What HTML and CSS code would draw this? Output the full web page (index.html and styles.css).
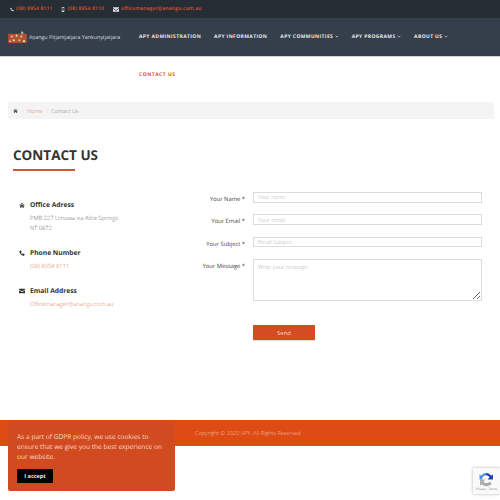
FILE: index.html
```html
<!DOCTYPE html>
<html lang="en">

<head>
    <meta charset="UTF-8">
    <meta name="viewport" content="width=device-width, initial-scale=1.0">
    <title>Contact Us</title>
    <link rel="stylesheet" href="styles.css">
</head>

<body>
    <div class="topbar">
        <span class="top-item">
            <svg class="top-icon" viewBox="0 0 16 16"><path d="M3 1l3 1 1 4-2 1c1 2 2 3 4 4l1-2 4 1 1 3-2 2C7 15 1 9 1 3z" /></svg>
            <a href="#">(08) 8954 8111</a>
        </span>
        <span class="top-item">
            <svg class="top-icon" viewBox="0 0 10 16"><path fill-rule="evenodd" d="M1 0h8v16H1zM2.5 2v10h5V2z" /></svg>
            <a href="#">(08) 8954 8110</a>
        </span>
        <span class="top-item">
            <svg class="top-icon mail" viewBox="0 0 16 12"><path d="M0 0h16v2L8 7 0 2zM0 4l8 5 8-5v8H0z" /></svg>
            <a href="#">officemanager@anangu.com.au</a>
        </span>
    </div>

    <header class="navbar">
        <a class="brand" href="#">
            <svg class="logo" viewBox="0 0 20 14">
                <rect y="3" width="20" height="10" fill="#b5512c" />
                <circle cx="4" cy="6" r="1.2" fill="#d9c2a6" />
                <circle cx="9" cy="5" r="1.1" fill="#e8d9c4" />
                <circle cx="14" cy="6" r="1.2" fill="#d9c2a6" />
                <circle cx="15" cy="2" r="1.4" fill="#aab0b5" />
                <circle cx="6" cy="10" r="1.2" fill="#e8d9c4" />
                <circle cx="12" cy="10" r="1.1" fill="#d9c2a6" />
                <circle cx="17" cy="11" r="1.2" fill="#e8d9c4" />
                <circle cx="2" cy="11" r="1" fill="#d9c2a6" />
            </svg>
            <span>Aṉangu Pitjantjatjara Yankunytjatjara</span>
        </a>
        <nav class="menu">
            <a href="#">APY ADMINISTRATION</a>
            <a href="#">APY INFORMATION</a>
            <a href="#">APY COMMUNITIES<svg class="caret" viewBox="0 0 6 4"><path d="M1 1l2 2 2-2" /></svg></a>
            <a href="#">APY PROGRAMS<svg class="caret" viewBox="0 0 6 4"><path d="M1 1l2 2 2-2" /></svg></a>
            <a href="#">ABOUT US<svg class="caret" viewBox="0 0 6 4"><path d="M1 1l2 2 2-2" /></svg></a>
        </nav>
    </header>

    <div class="subnav"><a href="#">CONTACT US</a></div>

    <div class="breadcrumb">
        <svg class="home-icon" viewBox="0 0 16 14"><path d="M8 1l8 6.5-1 1L8 3 1 8.5l-1-1zM3 9l5-4 5 4v5H9.5v-3h-3v3H3z" /></svg>
        <span class="sep">/</span>
        <a href="#">Home</a>
        <span class="sep">/</span>
        <span class="current">Contact Us</span>
    </div>

    <main class="content">
        <h1>CONTACT US</h1>
        <div class="columns">
            <section class="info">
                <div class="info-block">
                    <h3><svg viewBox="0 0 16 14"><path d="M8 1l8 6.5-1 1L8 3 1 8.5l-1-1zM3 9l5-4 5 4v5H9.5v-3h-3v3H3z" /></svg>Office Adress</h3>
                    <p>PMB 227 Umuwa via Alice Springs<br>NT 0872</p>
                </div>
                <div class="info-block">
                    <h3><svg viewBox="0 0 16 16"><path d="M3 1l3 1 1 4-2 1c1 2 2 3 4 4l1-2 4 1 1 3-2 2C7 15 1 9 1 3z" /></svg>Phone Number</h3>
                    <p><a href="#">(08) 8954 8111</a></p>
                </div>
                <div class="info-block">
                    <h3><svg viewBox="0 0 16 12"><path d="M0 0h16v2L8 7 0 2zM0 4l8 5 8-5v8H0z" /></svg>Email Address</h3>
                    <p><a href="#">Officemanager@anangu.com.au</a></p>
                </div>
            </section>

            <form class="contact-form">
                <label class="field">
                    <span>Your Name *</span>
                    <input type="text" placeholder="Your name">
                </label>
                <label class="field">
                    <span>Your Email *</span>
                    <input type="text" placeholder="Your email">
                </label>
                <label class="field">
                    <span>Your Subject *</span>
                    <input type="text" placeholder="Email Subject">
                </label>
                <label class="field">
                    <span>Your Message *</span>
                    <textarea placeholder="Write your message"></textarea>
                </label>
                <button class="send-button" type="button">Send</button>
            </form>
        </div>
    </main>

    <footer class="footer">Copyright © 2020 APY. All Rights Reserved</footer>

    <div class="cookie">
        <p>As a part of GDPR policy, we use cookies to ensure that we give you the best experience on our website.</p>
        <button type="button">I accept</button>
    </div>

    <div class="recaptcha">
        <svg viewBox="0 0 28 28">
            <path d="M13 2a12 12 0 0 1 10 5l3-3v10H16l4-4a8 8 0 0 0-7-4z" fill="#1c3aa9" />
            <path d="M13 2A12 12 0 0 0 4 7L1 4v10h5a8 8 0 0 1 7-8z" fill="#4a90e2" />
            <path d="M2 14h10l-4 4a8 8 0 0 0 12 0l4 4a13 13 0 0 1-19 1l-3 3z" fill="#ababab" />
        </svg>
        <small>Privacy - Terms</small>
    </div>
</body>

</html>
```

FILE: styles.css
```css
* {
    box-sizing: border-box;
}

body {
    font-family: "Open Sans", Arial, sans-serif;
    color: #333;
    background-color: #fff;
    margin: 0;
    padding: 0;
    height: 500px;
    overflow: hidden;
    position: relative;
    text-rendering: geometricPrecision;
}

a {
    color: #d9562b;
    text-decoration: none;
}

.topbar {
    height: 18px;
    background-color: #262d35;
    display: flex;
    align-items: center;
    padding-left: 10px;
    font-size: 5px;
    font-weight: 600;
    letter-spacing: 0.15px;
}

.top-item {
    display: flex;
    align-items: center;
    gap: 2px;
    margin-right: 9px;
}

.top-icon {
    width: 4px;
    height: 5px;
    fill: #dfe3e6;
}

.top-icon.mail {
    width: 6px;
}

.navbar {
    height: 39px;
    background-color: #353f4b;
    border-bottom: 1px solid #cfd4d9;
    display: flex;
    align-items: center;
    padding-left: 8px;
}

.brand {
    display: flex;
    align-items: center;
    gap: 2px;
    width: 131px;
    color: #d8dce0;
    font-size: 5.3px;
    white-space: nowrap;
}

.logo {
    width: 19px;
    height: 13px;
}

.menu {
    display: flex;
    gap: 13px;
}

.menu a {
    color: #e6e9eb;
    font-size: 5px;
    font-weight: 700;
    letter-spacing: 0.38px;
    white-space: nowrap;
}

.caret {
    width: 4px;
    height: 3px;
    margin-left: 1.5px;
    fill: none;
    stroke: #e6e9eb;
    stroke-width: 1;
}

.subnav {
    height: 45px;
    padding: 15px 0 0 139px;
    font-size: 5px;
    font-weight: 700;
    letter-spacing: 0.5px;
}

.subnav a {
    color: #cc5230;
}

.breadcrumb {
    margin: 0 6px 0 8px;
    height: 17px;
    background-color: #f4f4f4;
    border-radius: 2px;
    display: flex;
    align-items: center;
    padding-left: 5px;
    font-size: 5.6px;
    font-weight: 300;
}

.breadcrumb a {
    color: #e07a58;
}

.home-icon {
    width: 5px;
    height: 5px;
    fill: #333;
}

.sep {
    color: #ddd;
    margin: 0 3px 0 4px;
}

.current {
    color: #888;
}

.content {
    padding: 26px 18px 0 13px;
    height: 301px;
}

h1 {
    margin: 0;
    font-size: 13.5px;
    line-height: 20px;
    font-weight: 700;
    color: #333;
    width: 62px;
    white-space: nowrap;
    padding-bottom: 4px;
    border-bottom: 2px solid #cf5a32;
}

.columns {
    display: flex;
    margin-top: 21px;
}

.info {
    width: 130px;
    padding: 8px 0 0 6px;
}

.info-block {
    margin-bottom: 15px;
}

.info h3 {
    margin: 0;
    font-size: 6.7px;
    line-height: 10px;
    font-weight: 700;
    color: #333;
    display: flex;
    align-items: center;
}

.info h3 svg {
    width: 6px;
    height: 6px;
    fill: #333;
    margin-right: 5px;
}

.info p {
    margin: 3px 0 0 11px;
    font-size: 5.8px;
    line-height: 10px;
    font-weight: 300;
    color: #666;
    white-space: nowrap;
}

.info p a {
    color: #e07a58;
}

.contact-form {
    flex: 1;
}

.field {
    display: flex;
    margin-bottom: 8.4px;
}

.field span {
    width: 102px;
    margin-right: 8px;
    text-align: right;
    font-size: 5.8px;
    font-weight: 500;
    color: #444;
    line-height: 14px;
    flex-shrink: 0;
}

.field input,
.field textarea {
    flex: 1;
    min-width: 0;
    margin: 0;
    height: 10.5px;
    border: 1px solid #dcdcdc;
    padding: 0 4px;
    font-family: inherit;
    font-size: 5.6px;
    font-weight: 300;
    outline: none;
    border-radius: 0;
}

.field textarea {
    height: 41.5px;
    padding-top: 3px;
}

.field input::placeholder,
.field textarea::placeholder {
    color: #aaa;
}

.send-button {
    display: block;
    margin: 24.5px 0 0 110px;
    width: 62px;
    height: 15px;
    border: none;
    border-radius: 1px;
    background-color: #d54c22;
    color: #f5d9cc;
    font-family: inherit;
    font-size: 6px;
    padding: 0;
    box-shadow: 0 1px 1px rgba(0, 0, 0, 0.15);
}

.footer {
    height: 26px;
    background-color: #df4b14;
    color: #f3c6ae;
    font-size: 5.6px;
    font-weight: 300;
    line-height: 26px;
    padding-left: 195px;
}

.cookie {
    position: absolute;
    left: 8px;
    top: 421px;
    width: 167px;
    height: 70px;
    background-color: #d24a20;
    border-radius: 2px;
    padding: 11px 8px 0 9px;
    color: #f6dccf;
}

.cookie p {
    margin: 0;
    font-size: 6.6px;
    line-height: 10px;
}

.cookie button {
    display: block;
    margin-top: 6.5px;
    width: 36px;
    height: 14px;
    background-color: #000;
    border: none;
    border-radius: 1px;
    color: #eee;
    font-family: inherit;
    font-size: 5.5px;
    font-weight: 700;
    padding: 0;
}

.recaptcha {
    position: absolute;
    left: 473px;
    top: 468px;
    width: 27px;
    height: 26px;
    background-color: #f9f9f9;
    box-shadow: 0 0 3px rgba(0, 0, 0, 0.3);
    display: flex;
    flex-direction: column;
    align-items: center;
    overflow: hidden;
}

.recaptcha svg {
    width: 15px;
    height: 15px;
    margin-top: 4px;
    flex-shrink: 0;
}

.recaptcha small {
    font-size: 3px;
    color: #777;
    white-space: nowrap;
}
```
